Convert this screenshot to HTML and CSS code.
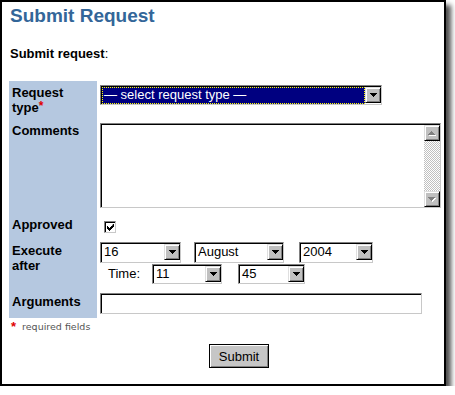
FILE: index.html
```html
<!DOCTYPE html>
<html lang="en">
<head>
    <meta charset="UTF-8">
    <meta name="viewport" content="width=device-width, initial-scale=1.0">
    <title>Submit Request</title>
    <link rel="stylesheet" href="styles.css">
</head>
<body>

<div class="window">
    <h1 class="title">Submit Request</h1>
    <p class="intro"><b>Submit request</b>:</p>

    <div class="form-grid">
        <div class="label">Request<br>type<span class="req">*</span></div>
        <div class="field field-type">
            <div class="select w-type">
                <span class="select-value is-selected">— select request type —</span>
                <span class="select-btn"><svg width="7" height="4" viewBox="0 0 7 4"><path d="M0 0h7v1h-1v1h-1v1h-1v1h-1v-1h-1v-1h-1v-1h-1z"/></svg></span>
            </div>
        </div>

        <div class="label">Comments</div>
        <div class="field field-comments">
            <div class="textarea">
                <div class="textarea-text"></div>
                <div class="scrollbar">
                    <span class="scroll-btn"><svg width="8" height="5" viewBox="0 0 8 5"><path class="hl" d="M4 1h1v1h1v1h1v1h1v1h-7v-1h1v-1h1v-1h1z"/><path class="sh" d="M3 0h1v1h1v1h1v1h1v1h-7v-1h1v-1h1v-1h1z"/></svg></span>
                    <span class="scroll-track"></span>
                    <span class="scroll-btn"><svg width="8" height="5" viewBox="0 0 8 5"><path class="hl" d="M1 1h7v1h-1v1h-1v1h-1v1h-1v-1h-1v-1h-1v-1h-1z"/><path class="sh" d="M0 0h7v1h-1v1h-1v1h-1v1h-1v-1h-1v-1h-1v-1h-1z"/></svg></span>
                </div>
            </div>
        </div>

        <div class="label">Approved</div>
        <div class="field field-approved">
            <span class="checkbox"><svg width="7" height="7" viewBox="0 0 7 7"><path d="M6 0h1v3h-1v1h-1v1h-1v1h-1v1h-1v-1h-1v-1h-1v-3h1v1h1v1h1v-1h1v-1h1z"/></svg></span>
        </div>

        <div class="label">Execute<br>after</div>
        <div class="field field-execute">
            <div class="date-row">
                <div class="select w-day">
                    <span class="select-value">16</span>
                    <span class="select-btn"><svg width="7" height="4" viewBox="0 0 7 4"><path d="M0 0h7v1h-1v1h-1v1h-1v1h-1v-1h-1v-1h-1v-1h-1z"/></svg></span>
                </div>
                <div class="select w-month">
                    <span class="select-value">August</span>
                    <span class="select-btn"><svg width="7" height="4" viewBox="0 0 7 4"><path d="M0 0h7v1h-1v1h-1v1h-1v1h-1v-1h-1v-1h-1v-1h-1z"/></svg></span>
                </div>
                <div class="select w-year">
                    <span class="select-value">2004</span>
                    <span class="select-btn"><svg width="7" height="4" viewBox="0 0 7 4"><path d="M0 0h7v1h-1v1h-1v1h-1v1h-1v-1h-1v-1h-1v-1h-1z"/></svg></span>
                </div>
            </div>
            <div class="time-row">
                <span class="time-label">Time:</span>
                <div class="select w-hour">
                    <span class="select-value">11</span>
                    <span class="select-btn"><svg width="7" height="4" viewBox="0 0 7 4"><path d="M0 0h7v1h-1v1h-1v1h-1v1h-1v-1h-1v-1h-1v-1h-1z"/></svg></span>
                </div>
                <div class="select w-min">
                    <span class="select-value">45</span>
                    <span class="select-btn"><svg width="7" height="4" viewBox="0 0 7 4"><path d="M0 0h7v1h-1v1h-1v1h-1v1h-1v-1h-1v-1h-1v-1h-1z"/></svg></span>
                </div>
            </div>
        </div>

        <div class="label">Arguments</div>
        <div class="field field-args"><div class="input"></div></div>
    </div>

    <p class="note"><span class="req">*</span>required fields</p>
    <div class="actions"><button class="btn" type="button">Submit</button></div>
</div>

</body>
</html>
```

FILE: styles.css
```css
body { margin: 0; padding: 0; background: #fff; font-family: "Liberation Sans", Arial, sans-serif; font-size: 13px; color: #000; }
.window { box-sizing: border-box; width: 446px; height: 386px; border: 2px solid #000; padding: 3px 3px 0 7px; background: #fff; box-shadow: 5px 5px 5px rgba(0, 0, 0, 0.7); }

.title { margin: 0; padding-left: 1px; font-size: 19px; line-height: 22px; font-weight: bold; color: #336699; }
.intro { margin: 19px 0 0; padding-left: 1px; line-height: 15px; }

/* label column + controls */
.form-grid { display: grid; grid-template-columns: 88px 341px; grid-template-rows: 38px 94px 26px 51px 28px; column-gap: 3px; margin-top: 20px; }
.label { background: #b5c8e0; padding: 4px 3px 0; font-weight: bold; line-height: 15px; }
.req { color: #e00000; font-weight: bold; font-size: 12px; vertical-align: top; line-height: 12px; }
.field-type, .field-comments { padding-top: 4px; }
.field-approved { padding: 8px 0 0 4px; }
.field-execute, .field-args { padding-top: 3px; }

/* sunken box used by selects, textarea, input */
.select, .textarea, .input, .checkbox { box-sizing: border-box; border: 1px solid; border-color: #808080 #c8c8c8 #c8c8c8 #808080; box-shadow: inset 1px 1px 0 #000; background: #fff; padding: 1px 0 0 1px; }

.select { display: flex; height: 20px; }
.select-value { flex: 1; padding-left: 2px; line-height: 16px; white-space: nowrap; overflow: hidden; }
.select-value.is-selected { background: #000080; color: #fff; outline: 1px dotted #ffff00; outline-offset: -1px; }
.select-btn { box-sizing: border-box; width: 16px; height: 16px; display: flex; align-items: center; justify-content: center; background: #c0c0c0; border: 1px solid; border-color: #dfdfdf #000 #000 #dfdfdf; box-shadow: inset 1px 1px 0 #fff, inset -1px -1px 0 #808080; }
.select-btn svg { display: block; fill: #000; }

.w-type { width: 282px; }
.w-day { width: 81px; height: 21px; }
.w-month { width: 90px; height: 21px; margin-left: 13px; }
.w-year { width: 74px; height: 21px; margin-left: 15px; }
.w-hour { width: 70px; }
.w-min { width: 67px; margin-left: 16px; }

.date-row { display: flex; }
.time-row { display: flex; align-items: center; margin-top: 1px; padding-left: 8px; }
.time-label { width: 44px; line-height: 20px; }

.textarea { display: flex; width: 341px; height: 85px; }
.textarea-text { flex: 1; }
.scrollbar { display: flex; flex-direction: column; width: 16px; }
.scroll-btn { box-sizing: border-box; width: 16px; height: 16px; display: flex; align-items: center; justify-content: center; background: #c0c0c0; border: 1px solid; border-color: #dfdfdf #000 #000 #dfdfdf; box-shadow: inset 1px 1px 0 #fff, inset -1px -1px 0 #808080; }
.scroll-btn svg { display: block; }
.scroll-btn .hl { fill: #fff; }
.scroll-btn .sh { fill: #808080; }
.scroll-track { flex: 1; background-color: #fff; background-image: repeating-conic-gradient(#c0c0c0 0 25%, #fff 0 50%); background-size: 2px 2px; }

.checkbox { display: flex; align-items: center; justify-content: center; width: 12px; height: 12px; padding: 1px 0 0 1px; }
.checkbox svg { display: block; fill: #000; }

.input { width: 322px; height: 21px; }

.note { margin: 3px 0 0; padding-left: 2px; font-family: "DejaVu Sans", Verdana, sans-serif; font-size: 9.5px; line-height: 12px; color: #555; }
.note .req { font-family: "Liberation Sans", Arial, sans-serif; font-size: 13px; margin-right: 6px; }

.actions { display: flex; justify-content: center; padding-left: 28px; margin-top: 11px; }
.btn { box-sizing: border-box; width: 60px; height: 24px; padding: 0; font-family: "Liberation Sans", Arial, sans-serif; font-size: 13px; color: #000; background: #c6c6c6; border: 1px solid #000; box-shadow: inset 1px 1px 0 #fff, inset -1px -1px 0 #808080; }
```
